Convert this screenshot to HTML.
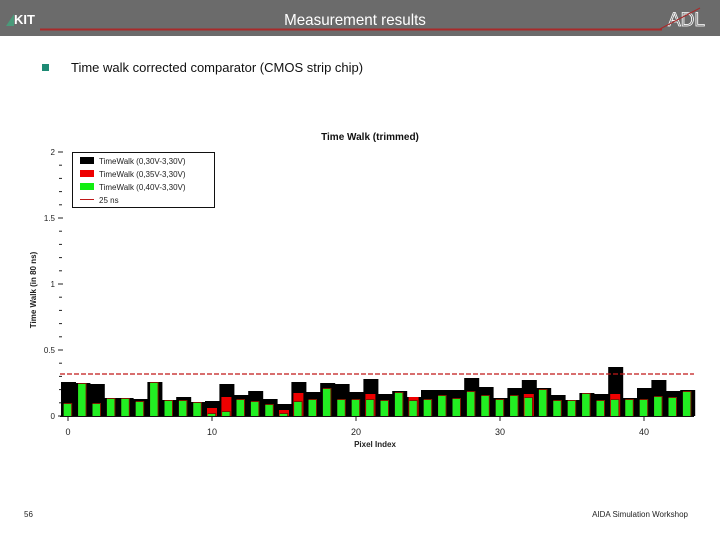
<!DOCTYPE html>
<html><head><meta charset="utf-8"><style>
html,body{margin:0;padding:0;width:720px;height:540px;overflow:hidden;background:#fff;font-family:"Liberation Sans",sans-serif}
</style></head><body>
<svg id="s" width="720" height="540" xmlns="http://www.w3.org/2000/svg" font-family="Liberation Sans, sans-serif">
<rect x="0" y="0" width="720" height="36" fill="#6b6b6b"/>
<line x1="40" y1="29.5" x2="662" y2="29.5" stroke="#a82a2a" stroke-width="2"/>
<text x="355" y="25" fill="#fff" font-size="16" text-anchor="middle" transform="translate(355,0) scale(0.95,1) translate(-355,0)">Measurement results</text>
<polygon points="6,26 14,14 14,26" fill="#4a9a7a"/>
<text x="14" y="24" fill="#fff" font-size="13" font-weight="bold">KIT</text>
<text x="668" y="26" fill="none" stroke="#fff" stroke-width="0.8" font-size="19">ADL</text>
<line x1="658" y1="30" x2="700" y2="8" stroke="#a82a2a" stroke-width="1"/>
<rect x="42" y="64" width="7" height="7" fill="#1d8a74"/>
<text x="71" y="72" font-size="13" fill="#111">Time walk corrected comparator (CMOS strip chip)</text>
<text x="370" y="140" font-size="10" font-weight="bold" text-anchor="middle" fill="#111">Time Walk (trimmed)</text>
<g font-size="8" fill="#222" text-anchor="end">
<text x="55" y="155">2</text><text x="55" y="221">1.5</text><text x="55" y="287">1</text><text x="55" y="353">0.5</text><text x="55" y="419">0</text>
</g>
<text transform="translate(36,290) rotate(-90)" font-size="8" font-weight="bold" text-anchor="middle" fill="#222">Time Walk (in 80 ns)</text>
<text x="375" y="447" font-size="8" font-weight="bold" text-anchor="middle" fill="#222">Pixel Index</text>
<g font-size="9" fill="#222" text-anchor="middle">
<text x="68" y="435">0</text><text x="212" y="435">10</text><text x="356" y="435">20</text><text x="500" y="435">30</text><text x="644" y="435">40</text>
</g>
<g id="ticks" stroke="#222" stroke-width="1"></g>
<g id="bars"></g>
<line x1="60" y1="374" x2="694" y2="374" stroke="#c01818" stroke-width="1.2" stroke-dasharray="5,2"/>
<line x1="60" y1="416.5" x2="694" y2="416.5" stroke="#111" stroke-width="1"/>
<rect x="72.5" y="152.5" width="142" height="55" fill="#fff" stroke="#111"/>
<rect x="80" y="157" width="14" height="7" fill="#000"/>
<rect x="80" y="170" width="14" height="7" fill="#e00"/>
<rect x="80" y="183" width="14" height="7" fill="#1e1"/>
<line x1="80" y1="199.5" x2="94" y2="199.5" stroke="#c01818"/>
<g font-size="8" fill="#222"><text x="99" y="164">TimeWalk (0,30V-3,30V)</text><text x="99" y="177">TimeWalk (0,35V-3,30V)</text><text x="99" y="190">TimeWalk (0,40V-3,30V)</text><text x="99" y="203">25 ns</text></g>
<text x="24" y="517" font-size="8" fill="#222">56</text>
<text x="688" y="517" font-size="8" fill="#222" text-anchor="end">AIDA Simulation Workshop</text>
</svg>
<script>
var B=[[382,0,403],[383,0,383],[384,0,403],[398,0,398],[398,0,398],[399,0,401],[382,0,382],[400,0,400],[397,0,400],[402,0,402],[401,408,413],[384,397,411],[395,0,399],[391,0,401],[399,0,404],[404,410,413],[382,393,401],[392,0,399],[383,0,388],[384,0,399],[392,0,399],[379,394,399],[394,0,400],[391,0,392],[397,397,400],[390,0,399],[390,0,395],[390,0,398],[378,0,391],[387,0,395],[398,0,399],[388,0,395],[380,394,397],[388,0,389],[395,0,400],[400,0,400],[393,0,393],[394,0,400],[367,394,399],[398,0,399],[388,0,399],[380,0,396],[391,0,397],[390,0,391]];
var ns="http://www.w3.org/2000/svg",g=document.getElementById('bars'),t=document.getElementById('ticks');
function r(x,y,w,h,f){var e=document.createElementNS(ns,'rect');e.setAttribute('x',x);e.setAttribute('y',y);e.setAttribute('width',w);e.setAttribute('height',h);e.setAttribute('fill',f);g.appendChild(e);}
function l(x1,y1,x2,y2){var e=document.createElementNS(ns,'line');e.setAttribute('x1',x1);e.setAttribute('y1',y1);e.setAttribute('x2',x2);e.setAttribute('y2',y2);t.appendChild(e);}
B.forEach(function(b,i){var c=68+14.4*i;r(c-7,b[0],15,416-b[0],'#000');if(b[1])r(c-5,b[1],10,416-b[1],'#e00');r(c-4.3,b[2],8.5,416-b[2],'#7a1a00');r(c-4.3,b[2]+1,7.5,415-b[2],'#22ee22');});
for(var k=0;k<=20;k++){var y=416-k*13.2;if(k%5==0)l(58,y,63,y);else l(59,y,62,y);}
[0,10,20,30,40].forEach(function(v){var x=68+14.4*v;l(x,417,x,421);});
</script>
</body></html>
